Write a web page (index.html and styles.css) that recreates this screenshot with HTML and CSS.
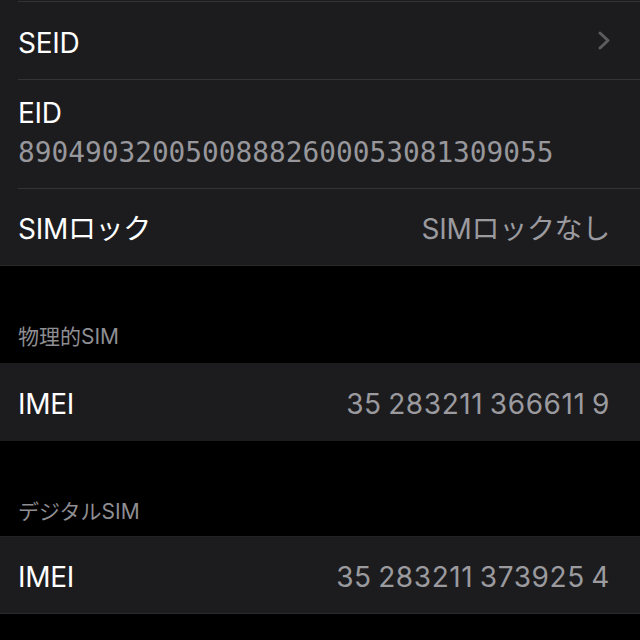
FILE: index.html
```html
<!DOCTYPE html>
<html lang="ja">
<head>
<meta charset="utf-8">
<title>SIM情報</title>
<link rel="stylesheet" href="styles.css">
</head>
<body>
<div class="card first">
  <div class="sep top"></div>
  <div class="row">
    <span class="label">SEID</span>
    <svg class="chev" width="14" height="21" viewBox="0 0 14 21"><polyline points="3,3 11,10.5 3,18" fill="none" stroke="#5b5b60" stroke-width="3" stroke-linecap="round" stroke-linejoin="round"/></svg>
  </div>
  <div class="sep"></div>
  <div class="row tall">
    <span class="label">EID</span>
    <span class="mono">89049032005008882600053081309055</span>
  </div>
  <div class="sep"></div>
  <div class="row last">
    <span class="label">SIMロック</span>
    <span class="value">SIMロックなし</span>
  </div>
</div>

<div class="header">物理的SIM</div>
<div class="card">
  <div class="row single">
    <span class="label">IMEI</span>
    <span class="value num">35 283211 366611 9</span>
  </div>
</div>

<div class="header second">デジタルSIM</div>
<div class="card edge">
  <div class="row last">
    <span class="label">IMEI</span>
    <span class="value num">35 283211 373925 4</span>
  </div>
</div>
</body>
</html>
```
FILE: styles.css
```css
html, body {
  margin: 0;
  padding: 0;
  background: #000;
}
body {
  width: 640px;
  height: 640px;
  overflow: hidden;
  font-family: Inter, "Noto Sans CJK JP", sans-serif;
  color: #fff;
}
.card {
  background: #1c1c1e;
}
.card.first {
  padding-top: 1px;
  border-bottom: 1px solid #2a2a2d;
}
.card.edge {
  border-top: 1px solid #232326;
  border-bottom: 1px solid #2a2a2d;
}
.sep {
  height: 1px;
  margin-left: 18px;
  background: #333336;
}
.row {
  height: 77px;
  display: flex;
  align-items: center;
  justify-content: space-between;
  padding: 4px 30px 0 18px;
  box-sizing: border-box;
}
.row.single {
  height: 78px;
}
.row.last {
  height: 76px;
}
.row.tall {
  height: 108px;
  flex-direction: column;
  align-items: flex-start;
  justify-content: flex-start;
  padding-top: 16px;
}
.label {
  font-size: 28px;
  line-height: 34px;
  letter-spacing: -0.3px;
  color: #fff;
}
.value {
  font-size: 28px;
  line-height: 34px;
  letter-spacing: -0.3px;
  color: #9a9a9f;
}
.value.num {
  letter-spacing: 0.6px;
  word-spacing: -2px;
}
.mono {
  font-family: "DejaVu Sans Mono", monospace;
  font-size: 27.8px;
  line-height: 32px;
  margin-top: 7px;
  color: #97979c;
}
.chev {
  margin-right: -1px;
  margin-top: -4px;
  display: block;
}
.header {
  height: 97px;
  box-sizing: border-box;
  padding: 58px 0 0 18px;
  font-size: 21px;
  line-height: 26px;
  color: #8e8e93;
}
.header.second {
  height: 95px;
}
```
